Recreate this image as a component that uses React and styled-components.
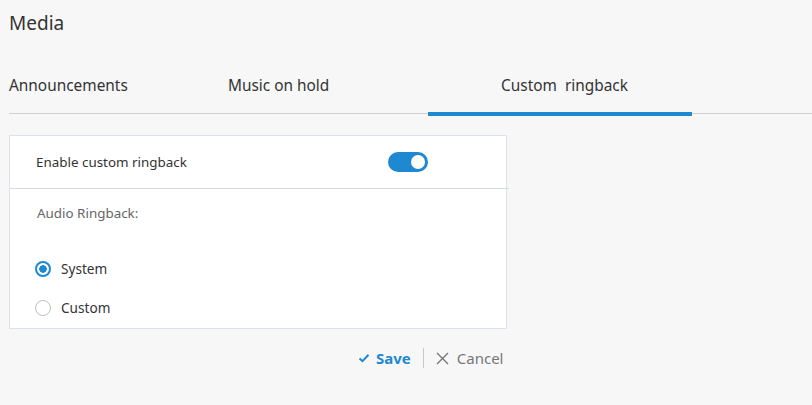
import React, { useState } from 'react';
import styled, { createGlobalStyle } from 'styled-components';

const GlobalStyle = createGlobalStyle`
  html, body {
    margin: 0;
    padding: 0;
    background: #f7f7f7;
    font-family: "Noto Sans", "Open Sans", sans-serif;
    color: #333;
  }
`;

export default function App() {
  const [enabled, setEnabled] = useState(true);
  const [ringback, setRingback] = useState('system');

  const tabs = [
    { label: 'Announcements', width: 219, align: 'left' },
    { label: 'Music on hold', width: 200, align: 'left' },
    { label: 'Custom  ringback', width: 264, align: 'center', active: true },
  ];

  return (
    <Page>
      <GlobalStyle />
      <Title>Media</Title>

      <Tabs>
        {tabs.map((t) => (
          <Tab key={t.label} $width={t.width} $align={t.align} $active={t.active}>
            {t.label}
          </Tab>
        ))}
      </Tabs>

      <Card>
        <ToggleRow>
          <Label>Enable custom ringback</Label>
          <Toggle $on={enabled} onClick={() => setEnabled(!enabled)}>
            <Knob $on={enabled} />
          </Toggle>
        </ToggleRow>

        <Section>
          <SubLabel>Audio Ringback:</SubLabel>
          <Radios>
            <RadioRow onClick={() => setRingback('system')}>
              <Radio $checked={ringback === 'system'} />
              System
            </RadioRow>
            <RadioRow onClick={() => setRingback('custom')}>
              <Radio $checked={ringback === 'custom'} />
              Custom
            </RadioRow>
          </Radios>
        </Section>
      </Card>

      <Actions>
        <SaveButton>
          <svg width="12" height="10" viewBox="0 0 12 10">
            <path d="M1.5 5.5 L4.5 8.2 L10.5 1.8" fill="none" stroke="#1e88d0" strokeWidth="2" />
          </svg>
          Save
        </SaveButton>
        <Divider />
        <CancelButton>
          <svg width="13" height="13" viewBox="0 0 13 13">
            <path d="M1 1 L12 12 M12 1 L1 12" fill="none" stroke="#777" strokeWidth="1.4" />
          </svg>
          Cancel
        </CancelButton>
      </Actions>
    </Page>
  );
}

const Page = styled.div`
  padding: 10px 0 0 9px;
`;

const Title = styled.h1`
  margin: 0;
  font-size: 19px;
  font-weight: 400;
  line-height: 26px;
  color: #333;
`;

const Tabs = styled.div`
  display: flex;
  margin-top: 36px;
  border-bottom: 1px solid #d0d0d0;
`;

const Tab = styled.div`
  position: relative;
  box-sizing: border-box;
  width: ${(p) => p.$width}px;
  text-align: ${(p) => p.$align};
  font-size: 15.4px;
  line-height: 20px;
  padding: 4px 0 17px ${(p) => (p.$align === 'center' ? '9px' : '0')};
  color: #333;
  white-space: pre;

  ${(p) =>
    p.$active &&
    `
    &::after {
      content: '';
      position: absolute;
      left: 0;
      right: 0;
      bottom: -3px;
      height: 4px;
      background: #1e88d0;
    }
  `}
`;

const Card = styled.div`
  margin-top: 21px;
  width: 496px;
  background: #fff;
  border: 1px solid #dde3ea;
`;

const ToggleRow = styled.div`
  display: flex;
  align-items: center;
  justify-content: space-between;
  height: 52px;
  padding: 0 81px 0 26px;
  border-bottom: 1px solid #d5dbe1;
  margin-right: -3px;
`;

const Label = styled.span`
  font-size: 13.4px;
  color: #333;
`;

const Toggle = styled.div`
  position: relative;
  width: 40px;
  height: 20px;
  border-radius: 10px;
  background: ${(p) => (p.$on ? '#1e88d0' : '#c5ccd3')};
  cursor: pointer;
`;

const Knob = styled.div`
  position: absolute;
  top: 3px;
  left: ${(p) => (p.$on ? '23px' : '3px')};
  width: 14px;
  height: 14px;
  border-radius: 50%;
  background: #fff;
`;

const Section = styled.div`
  padding: 14px 0 0 27px;
`;

const SubLabel = styled.div`
  font-size: 13.4px;
  line-height: 20px;
  color: #666;
`;

const Radios = styled.div`
  display: flex;
  flex-direction: column;
  gap: 19px;
  padding: 36px 0 10px;
  margin-left: -2px;
`;

const RadioRow = styled.label`
  display: flex;
  align-items: center;
  gap: 10px;
  font-size: 13.6px;
  line-height: 20px;
  color: #333;
  cursor: pointer;
`;

const Radio = styled.span`
  box-sizing: border-box;
  width: 16px;
  height: 16px;
  border-radius: 50%;
  border: ${(p) => (p.$checked ? '2px solid #1e88d0' : '1px solid #b8c0c8')};
  background: ${(p) => (p.$checked ? 'radial-gradient(circle, #1e88d0 0 3.5px, #fff 4px)' : '#fff')};
`;

const Actions = styled.div`
  display: flex;
  align-items: center;
  justify-content: flex-start;
  padding: 19px 0 0 349px;
  gap: 12px;
`;

const SaveButton = styled.button`
  display: flex;
  align-items: center;
  gap: 6px;
  border: none;
  background: none;
  padding: 0;
  font-family: inherit;
  font-size: 15px;
  font-weight: 700;
  color: #1e88d0;
  cursor: pointer;
`;

const Divider = styled.span`
  width: 1px;
  height: 20px;
  background: #c8c8c8;
`;

const CancelButton = styled.button`
  display: flex;
  align-items: center;
  gap: 8px;
  border: none;
  background: none;
  padding: 0;
  font-family: inherit;
  font-size: 15px;
  color: #777;
  cursor: pointer;
`;
